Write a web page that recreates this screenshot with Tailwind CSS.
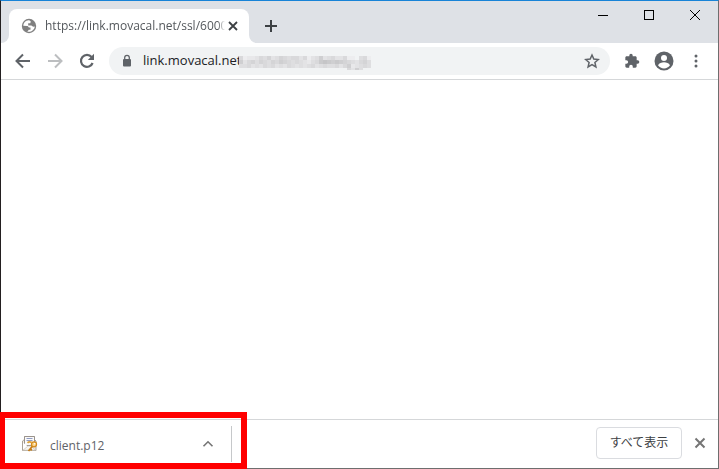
<!DOCTYPE html>
<html lang="ja">
  <head>
    <meta charset="UTF-8" />
    <meta name="viewport" content="width=device-width, initial-scale=1.0" />
    <title>client.p12</title>
    <script src="https://cdn.jsdelivr.net/npm/@tailwindcss/browser@4"></script>
  </head>
  <body class="bg-white font-['Open_Sans','Noto_Sans_CJK_JP',sans-serif]">
    <div
      class="h-screen flex flex-col border border-t-[#1883d7] border-l-[#231f20] border-r-[#6e6e6e] border-b-[#6e6e6e] text-[#5f6368]"
    >
      <!-- Tab strip -->
      <header class="flex h-[42px] bg-[linear-gradient(#dee1e6_50%,#fff_50%)]">
        <div class="w-2 bg-[#dee1e6] rounded-br-lg"></div>
        <div class="w-60 pt-2 flex">
          <div class="flex-1 min-w-0 flex items-center bg-white rounded-t-lg pl-3 pr-2">
            <svg class="w-4 h-4 shrink-0" viewBox="0 0 16 16" aria-hidden="true">
              <circle cx="8" cy="8" r="7.2" fill="#808080" />
              <path
                d="M7.6 2.3c-3 .2-5.2 2.600-5.300 5.500l3.500.1c1.100 0 1.800.6 2 1.500h1.700v2.300H7.700c-.3.900-.8 1.300-1.600 1.700 3.500 1.100 7.200-1.100 7.700-5l-1.800.4c-.6-.9-1.500-1.500-2.700-1.300H7.200V5.300h2.100l.5-1.900c-.7-.6-1.400-1-2.200-1.100z"
                fill="#fff"
              />
            </svg>
            <span
              class="flex-1 min-w-0 ml-2 text-xs text-[#54585c] whitespace-nowrap mask-r-from-96% mask-r-to-100%"
              >https://link.movacal.net/ssl/6000</span
            >
            <button type="button" aria-label="Close tab" class="w-4 h-4 shrink-0">
              <svg class="w-4 h-4" viewBox="0 0 16 16" fill="none" stroke="#3c4043" stroke-width="1.8">
                <path d="M4 4l8 8M12 4l-8 8" />
              </svg>
            </button>
          </div>
        </div>
        <div class="flex-1 flex bg-[#dee1e6] rounded-bl-lg">
          <button type="button" aria-label="New tab" class="w-7 h-7 ml-2 mt-[11px]">
            <svg class="w-7 h-7" viewBox="0 0 28 28" fill="none" stroke="#3c4043" stroke-width="2">
              <path d="M14 8v12M8 14h12" />
            </svg>
          </button>
          <div class="flex ml-auto h-7">
            <button type="button" aria-label="Minimize" class="w-[46px]">
              <svg class="w-[46px] h-7" viewBox="0 0 46 28" shape-rendering="crispEdges">
                <path d="M18 14h10v1H18z" fill="#000" />
              </svg>
            </button>
            <button type="button" aria-label="Maximize" class="w-[46px]">
              <svg class="w-[46px] h-7" viewBox="0 0 46 28" shape-rendering="crispEdges">
                <path d="M18.500 9.500h9v9h-9z" fill="none" stroke="#000" />
              </svg>
            </button>
            <button type="button" aria-label="Close" class="w-[46px]">
              <svg class="w-[46px] h-7" viewBox="0 0 46 28">
                <path d="M18 9l10 10M28 9L18 19" stroke="#000" />
              </svg>
            </button>
          </div>
        </div>
      </header>

      <!-- Toolbar -->
      <nav class="flex items-center h-[37px] pl-3 pr-3.5 border-b border-[#d5d7d9]">
        <button type="button" aria-label="Back" class="w-5 h-5">
          <svg class="w-5 h-5" viewBox="0 0 20 20" fill="none" stroke="#5f6368" stroke-width="2">
            <path d="M17 10H4M10 3.500L3.500 10l6.500 6.500" />
          </svg>
        </button>
        <button type="button" aria-label="Forward" class="w-5 h-5 ml-3" disabled>
          <svg class="w-5 h-5" viewBox="0 0 20 20" fill="none" stroke="#bcbec0" stroke-width="2">
            <path d="M3 10h13M10 3.500l6.500 6.500-6.500 6.500" />
          </svg>
        </button>
        <button type="button" aria-label="Reload" class="w-5 h-5 ml-3">
          <svg class="w-5 h-5" viewBox="0 0 20 20">
            <path
              d="M15.600 12A6 6 0 1 1 14.600 6"
              fill="none"
              stroke="#5f6368"
              stroke-width="2.200"
            />
            <path d="M17 2.800V9h-6.200z" fill="#5f6368" />
          </svg>
        </button>
        <div class="flex-1 min-w-0 flex items-center h-7 ml-3 px-2.5 rounded-full bg-[#f1f3f4]">
          <svg class="w-4 h-4 shrink-0" viewBox="0 0 16 16" aria-hidden="true">
            <rect x="4" y="6" width="8" height="7.500" rx="1" fill="#5f6368" />
            <path d="M5.700 6.500V4.600a2.300 2.300 0 0 1 4.600 0v1.900" fill="none" stroke="#5f6368" stroke-width="1.300" />
          </svg>
          <input
            type="text"
            aria-label="Address"
            value="link.movacal.net"
            class="w-24 ml-2 text-[13px] text-[#202124] bg-transparent outline-none"
          />
          <!-- Hidden part of the address -->
          <svg id="mosaic" class="w-33 h-5 shrink-0" viewBox="0 0 132 20" shape-rendering="crispEdges"></svg>
          <button type="button" aria-label="Bookmark" class="w-4 h-4 ml-auto shrink-0">
            <svg class="w-4 h-4" viewBox="0 0 16 16" fill="none" stroke="#5f6368" stroke-width="1.500">
              <path d="M8 2l1.800 4.100 4.500.4-3.400 3 1 4.400L8 11.600l-3.900 2.300 1-4.400-3.400-3 4.500-.4z" />
            </svg>
          </button>
        </div>
        <button type="button" aria-label="Extensions" class="w-4 h-4 ml-3.5">
          <svg class="w-4 h-4" viewBox="0 0 24 24" fill="#5f6368">
            <path
              d="M20.500 11H19V7c0-1.100-.9-2-2-2h-4V3.500a2.500 2.500 0 0 0-5 0V5H4c-1.100 0-2 .9-2 2v3.800h1.500a2.700 2.700 0 0 1 0 5.400H2V20c0 1.100.9 2 2 2h3.800v-1.500a2.700 2.700 0 0 1 5.400 0V22H17c1.100 0 2-.9 2-2v-4h1.500a2.500 2.500 0 0 0 0-5z"
            />
          </svg>
        </button>
        <button type="button" aria-label="Profile" class="w-5 h-5 ml-3.5">
          <svg class="w-5 h-5" viewBox="0 0 20 20">
            <circle cx="10" cy="10" r="9.500" fill="#5f6368" />
            <circle cx="10" cy="7" r="3" fill="#fff" />
            <path d="M4 14.200c1.200-2.200 3.500-3 6-3s4.800.8 6 3a7.200 7.200 0 0 1-12 0z" fill="#fff" />
          </svg>
        </button>
        <button type="button" aria-label="Menu" class="w-4 h-4 ml-3.5">
          <svg class="w-4 h-4" viewBox="0 0 16 16" fill="#5f6368">
            <circle cx="8" cy="3" r="1.500" />
            <circle cx="8" cy="8" r="1.500" />
            <circle cx="8" cy="13" r="1.500" />
          </svg>
        </button>
      </nav>

      <!-- Page content -->
      <main class="flex-1 bg-white"></main>

      <!-- Download shelf -->
      <footer class="relative flex items-center h-[49px] pr-2.5 border-t border-[#d5d7d9]">
        <div class="flex items-center w-[231px] h-9 pt-1 pl-[21px] pr-[15px] border-r border-[#c6c8ca]">
          <svg class="w-4 h-4 mb-1 shrink-0" viewBox="0 0 16 16" aria-hidden="true">
            <path d="M.5 5l2-1.500v-3h10V3.500l1.500 1.500v9.500H.5z" fill="#f1ece4" stroke="#aaa197" />
            <path d="M2.500.5h10v9h-10z" fill="#fafafa" stroke="#9a938c" />
            <path d="M4.500 2.500h6M4.500 4.500h6" stroke="#929dc4" />
            <path d="M1 14V6.500l5 4z" fill="#fff" />
            <path d="M1 14.200l5-4.200h3l4.500 4.200z" fill="#f8f5f0" stroke="#c4bdb4" stroke-width=".6" />
            <path d="M11 9.500L6.500 15M8.300 13l1.500 1.300" stroke="#c57c16" stroke-width="1.800" />
            <circle cx="12" cy="8.300" r="2.500" fill="#fbd58a" stroke="#d48a1c" stroke-width="1.300" />
            <circle cx="12.700" cy="7.800" r=".8" fill="#fff" />
            <path d="M5.500 6.800c1.200-1.300 3-1.100 4.300-.4" fill="none" stroke="#dda23c" stroke-width="1.700" />
          </svg>
          <span class="ml-3 text-xs">client.p12</span>
          <button type="button" aria-label="Download options" class="w-4 h-4 mb-1 ml-auto">
            <svg class="w-4 h-4" viewBox="0 0 16 16" fill="none" stroke="#757575" stroke-width="1.600">
              <path d="M3.500 10.300L8 5.800l4.500 4.500" />
            </svg>
          </button>
        </div>
        <button
          type="button"
          class="ml-auto mb-0.5 h-8 w-[86px] border border-[#dadce0] rounded text-xs text-[#3c4043]"
        >
          すべて表示
        </button>
        <button type="button" aria-label="Close shelf" class="w-4 h-4 mb-0.5 ml-2.5">
          <svg class="w-4 h-4" viewBox="0 0 16 16" fill="none" stroke="#757575" stroke-width="2">
            <path d="M3.500 3.500l9 9M12.500 3.500l-9 9" />
          </svg>
        </button>
        <!-- Highlight frame -->
        <div class="absolute -left-px -top-2 -bottom-px w-[247px] border-6 border-l-5 border-[#f00] pointer-events-none"></div>
      </footer>
    </div>
    <script>
      // lightness of each 4px block, one string per row; "." is empty
      const rows = [
        "9dccb9a8ba89a99b9dba7ba9bb9dd.a9d",
        "7b98a89a89789a9abca965676789ab98a",
        "aa9bab9a9bab9ababa9ba9aa9b97cba9a",
        "...........................9b7a..",
      ];
      const mosaic = document.getElementById("mosaic");
      rows.forEach((row, y) => {
        [...row].forEach((c, x) => {
          if (c === ".") return;
          const v = 172 + parseInt(c, 16) * 5;
          const rect = document.createElementNS("http://www.w3.org/2000/svg", "rect");
          rect.setAttribute("x", x * 4);
          rect.setAttribute("y", y * 4 + 5);
          rect.setAttribute("width", 4);
          rect.setAttribute("height", y === 3 ? 2 : 4);
          rect.setAttribute("fill", `rgb(${v},${v},${v + 2})`);
          mosaic.appendChild(rect);
        });
      });
    </script>
  </body>
</html>
